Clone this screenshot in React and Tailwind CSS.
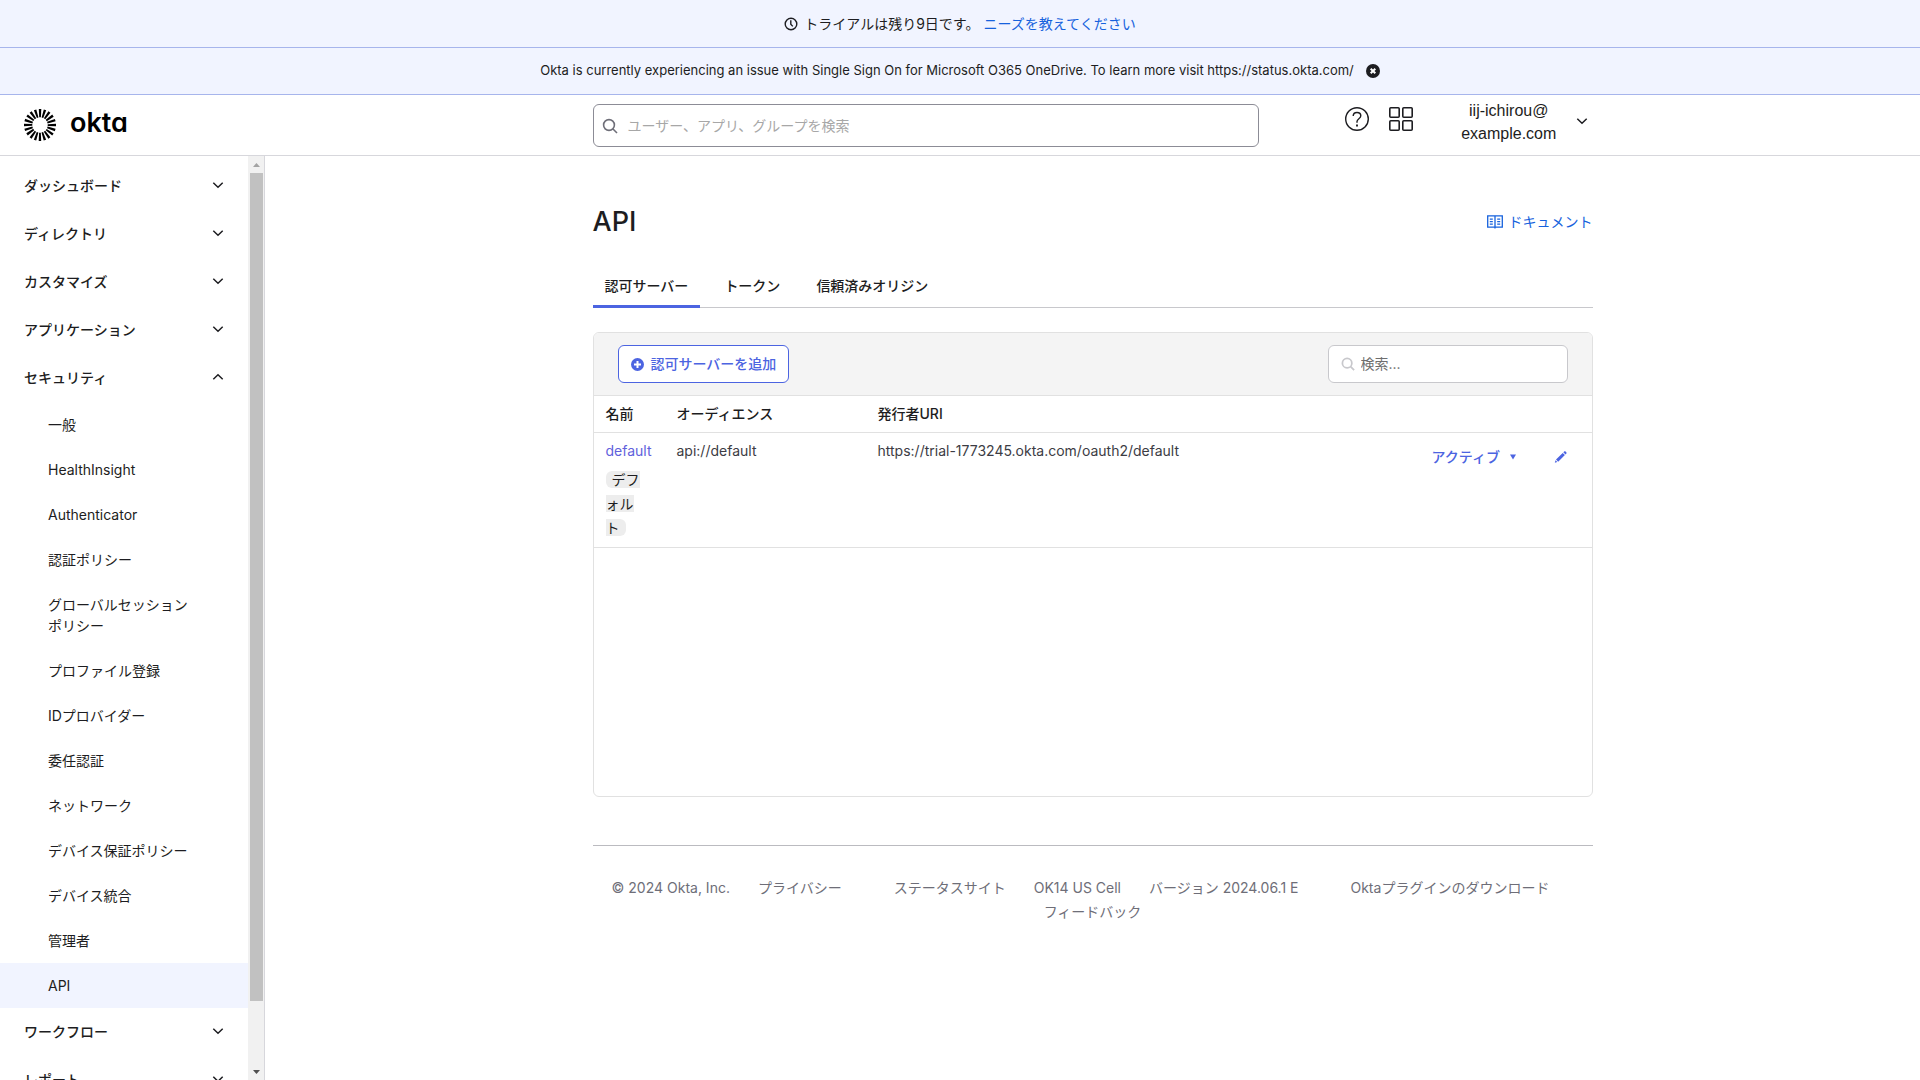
import React, { useState } from 'react'

const SECURITY_ITEMS = [
  '一般',
  'HealthInsight',
  'Authenticator',
  '認証ポリシー',
  'グローバルセッションポリシー',
  'プロファイル登録',
  'IDプロバイダー',
  '委任認証',
  'ネットワーク',
  'デバイス保証ポリシー',
  'デバイス統合',
  '管理者',
  'API',
]

const NAV_GROUPS = [
  { label: 'ダッシュボード' },
  { label: 'ディレクトリ' },
  { label: 'カスタマイズ' },
  { label: 'アプリケーション' },
  { label: 'セキュリティ', items: SECURITY_ITEMS },
  { label: 'ワークフロー' },
  { label: 'レポート' },
]

const TABS = ['認可サーバー', 'トークン', '信頼済みオリジン']

const SERVERS = [
  { name: 'default', audience: 'api://default', issuer: 'https://trial-1773245.okta.com/oauth2/default' },
]

function Chevron({ up = false }) {
  return (
    <svg width="12" height="10" viewBox="0 0 12 10" fill="none" stroke="currentColor" strokeWidth="1.5" aria-hidden="true">
      <path d={up ? 'M1.3 6.3 6 1.8l4.7 4.5' : 'M1.3 1.8l4.7 4.5 4.7-4.5'} />
    </svg>
  )
}

function SearchIcon({ size = 16, strokeWidth = 1.6 }) {
  return (
    <svg width={size} height={size} viewBox="0 0 16 16" fill="none" stroke="currentColor" strokeWidth={strokeWidth} className="shrink-0" aria-hidden="true">
      <circle cx="7" cy="7" r="5.4" />
      <path d="M11 11l4 4" />
    </svg>
  )
}

function SunLogo() {
  const rays = Array.from({ length: 20 }, (_, i) => i * 18)
  return (
    <svg width="32" height="32" viewBox="-16 -16 32 32" aria-hidden="true">
      {rays.map((deg) => (
        <path key={deg} d="M-1.2 -16h2.5l-.4 8.3h-1.7z" transform={`rotate(${deg})`} fill="#000" />
      ))}
    </svg>
  )
}

function Banners() {
  const [open, setOpen] = useState(true)
  return (
    <div className="shrink-0 text-[#1d1d21]">
      <div className="flex h-12 items-center justify-center border-b border-[#a7b5ec] bg-[#f1f4ff] text-sm">
        <svg className="mr-1.5" width="14" height="14" viewBox="0 0 14 14" fill="none" stroke="currentColor" strokeWidth="1.4" aria-hidden="true">
          <circle cx="7" cy="7" r="5.8" />
          <path d="M6.8 3.2v4l2 2.2" />
        </svg>
        <span>トライアルは残り9日です。</span>
        <a href="#needs" className="ml-1 text-[#1662dd]">ニーズを教えてください</a>
      </div>
      {open && (
        <div className="flex h-[47px] items-center justify-center border-b border-[#a7b5ec] bg-[#f1f4ff] text-[13px]">
          <span>
            Okta is currently experiencing an issue with Single Sign On for Microsoft O365 OneDrive. To learn more visit https://status.okta.com/
          </span>
          <button aria-label="閉じる" className="ml-3" onClick={() => setOpen(false)}>
            <svg width="14" height="14" viewBox="0 0 14 14" aria-hidden="true">
              <circle cx="7" cy="7" r="7" fill="#1d1d21" />
              <path d="M4.7 4.7l4.6 4.6M9.3 4.7L4.7 9.3" stroke="#fff" strokeWidth="2" />
            </svg>
          </button>
        </div>
      )}
    </div>
  )
}

function Header() {
  return (
    <header className="flex h-[61px] shrink-0 border-b border-[#d7d7dc]">
      <a href="#home" aria-label="okta" className="flex w-[265px] shrink-0 items-center gap-3.5 pl-6">
        <SunLogo />
        <span className="pb-1 text-[27px] leading-8 font-semibold text-black [font-feature-settings:'cv11']">okta</span>
      </a>
      <div className="flex flex-1 justify-center">
        <div className="flex w-full max-w-[1000px] items-start">
          <label className="mt-[9px] flex h-[43px] w-2/3 items-center gap-2.5 rounded-md border border-[#8c8c96] px-2 text-[#6e6e78]">
            <SearchIcon />
            <input
              type="text"
              aria-label="検索"
              placeholder="ユーザー、アプリ、グループを検索"
              className="w-full text-sm outline-none placeholder:text-[#a7a7a7]"
            />
          </label>
          <div className="ml-[86px] flex gap-5 pt-3 text-[#1d1d21]">
            <button aria-label="ヘルプ">
              <svg width="24" height="24" viewBox="0 0 24 24" fill="none" stroke="currentColor" strokeWidth="1.4" aria-hidden="true">
                <circle cx="12" cy="12" r="11.3" />
                <path d="M8.2 9.1c0-2.2 1.6-3.6 3.8-3.6s3.8 1.3 3.8 3.3c0 2.9-3.8 2.9-3.8 5.7v1.3" />
                <path d="M12 17.6v2" strokeWidth="1.9" />
              </svg>
            </button>
            <button aria-label="アプリ">
              <svg width="24" height="24" viewBox="0 0 24 24" fill="none" stroke="currentColor" strokeWidth="1.6" aria-hidden="true">
                <rect x=".8" y=".8" width="9.4" height="9.4" rx="1" />
                <rect x="13.8" y=".8" width="9.4" height="9.4" rx="1" />
                <rect x=".8" y="13.8" width="9.4" height="9.4" rx="1" />
                <rect x="13.8" y="13.8" width="9.4" height="9.4" rx="1" />
              </svg>
            </button>
          </div>
          <button className="ml-12 flex items-center gap-5 pt-1 text-[#1d1d21]">
            <span className="text-center font-['Liberation_Sans',Arial,sans-serif] text-base leading-[23px]">
              iij-ichirou@
              <br />
              example.com
            </span>
            <Chevron />
          </button>
        </div>
      </div>
    </header>
  )
}

function Sidebar() {
  return (
    <aside className="flex w-[265px] shrink-0 overflow-hidden border-r border-[#d7d7dc]">
      <nav className="flex-1 overflow-hidden pt-1.5 text-sm text-[#1d1d21]">
        {NAV_GROUPS.map((group) => (
          <div key={group.label}>
            <button className="flex h-12 w-full items-center justify-between pr-6 pl-6 font-medium" aria-expanded={!!group.items}>
              {group.label}
              <Chevron up={!!group.items} />
            </button>
            {group.items && (
              <ul>
                {group.items.map((item) => (
                  <li key={item}>
                    <a
                      href="#nav"
                      className={`block py-3 pr-14 pl-12 leading-[21px] ${item === 'API' ? 'bg-[#f1f4ff]' : ''}`}
                    >
                      {item}
                    </a>
                  </li>
                ))}
              </ul>
            )}
          </div>
        ))}
      </nav>

      {/* Scrollbar */}
      <div className="flex w-4 flex-col bg-[#f1f1f1] pr-px pl-0.5" aria-hidden="true">
        <div className="flex h-[17px] shrink-0 items-center justify-center">
          <svg width="7" height="4" viewBox="0 0 7 4"><path d="M0 4L3.5 0 7 4z" fill="#a3a3a3" /></svg>
        </div>
        <div className="min-h-0 flex-1">
          <div className="h-[93%] bg-[#c1c1c1]" />
        </div>
        <div className="flex h-[17px] shrink-0 items-center justify-center">
          <svg width="7" height="4" viewBox="0 0 7 4"><path d="M0 0L3.5 4 7 0z" fill="#505050" /></svg>
        </div>
      </div>
    </aside>
  )
}

function ServerTable() {
  return (
    <table className="w-full table-fixed text-left text-sm">
      <thead>
        <tr className="h-9 border-b border-[#e1e1e1]">
          <th className="w-[71px] px-3 font-medium">名前</th>
          <th className="w-[201px] px-3 font-medium">オーディエンス</th>
          <th className="px-3 font-medium">発行者URI</th>
          <th className="w-[184px]" aria-label="アクション" />
        </tr>
      </thead>
      <tbody>
        {SERVERS.map((server) => (
          <tr key={server.name} className="border-b border-[#e1e1e1] align-top leading-6">
            <td className="px-3 pt-1.5 pb-[7px]">
              <a href="#server" className="mb-[5px] block text-[#6161dc]">{server.name}</a>
              <span className="rounded-md bg-[#ededed] px-1.5 break-all">デフォルト</span>
            </td>
            <td className="px-3 pt-1.5 text-[#3c3c44]">{server.audience}</td>
            <td className="px-3 pt-1.5 text-[#3c3c44]">{server.issuer}</td>
            <td className="pt-3 pr-6">
              <div className="flex items-center justify-between pl-6 text-[#4c64e1]">
                <button className="flex items-center gap-2.5 font-medium" aria-haspopup="menu">
                  アクティブ
                  <svg width="6" height="6" viewBox="0 0 6 6" fill="currentColor" aria-hidden="true"><path d="M0 .5h6L3 5.5z" /></svg>
                </button>
                <button aria-label="編集">
                  <svg width="14" height="14" viewBox="0 0 14 14" fill="currentColor" aria-hidden="true">
                    <path d="M.8 12.8l.7-2.5 1.8 1.8zM2 9.6l6.7-6.7 2.2 2.2-6.7 6.7zM9.3 2.3l.9-.9c1-1 3.2 1.2 2.2 2.2l-.9.9z" />
                  </svg>
                </button>
              </div>
            </td>
          </tr>
        ))}
      </tbody>
    </table>
  )
}

function Footer() {
  return (
    <footer className="mt-12 flex flex-wrap justify-center border-t border-[#bbbbc0] pt-[30px] text-sm leading-6 text-[#6e6e78]">
      <span className="px-3.5">© 2024 Okta, Inc.</span>
      <a href="#privacy" className="mr-6 px-3.5">プライバシー</a>
      <a href="#status" className="px-3.5">ステータスサイト</a>
      <span className="px-3.5">OK14 US Cell</span>
      <span className="mr-6 px-3.5">バージョン 2024.06.1 E</span>
      <a href="#plugin" className="mr-6 px-3.5">Oktaプラグインのダウンロード</a>
      <a href="#feedback" className="px-3.5">フィードバック</a>
    </footer>
  )
}

export default function App() {
  const [tab, setTab] = useState(TABS[0])

  return (
    <div className="flex h-screen flex-col overflow-hidden bg-white font-['Inter','Noto_Sans_CJK_JP',sans-serif] text-[#1d1d21]">
      <Banners />
      <Header />
      <div className="flex min-h-0 flex-1">
        <Sidebar />
        <main className="flex-1 overflow-hidden">
          <div className="mx-auto max-w-[1000px] pt-12">
            <div className="flex items-center justify-between">
              <h1 className="text-[27px] leading-9 font-medium">API</h1>
              <a href="#docs" className="flex items-center gap-1.5 text-sm text-[#1662dd]">
                <svg width="16" height="14" viewBox="0 0 16 14" fill="none" stroke="currentColor" strokeWidth="1.3" aria-hidden="true">
                  <path d="M.7 .8h14.6v11.4H.7zM8 .8v12.6M2.8 4.2h3M2.8 6.7h3M2.8 9.2h3M10.2 4.2h3M10.2 6.7h3M10.2 9.2h3" />
                </svg>
                ドキュメント
              </a>
            </div>

            {/* Tabs */}
            <div className="mt-[34px] flex gap-3 border-b border-[#c8c8cc]" role="tablist">
              {TABS.map((label) => (
                <button
                  key={label}
                  role="tab"
                  aria-selected={tab === label}
                  onClick={() => setTab(label)}
                  className={`-mb-px border-b-3 px-3 pb-[7px] text-sm leading-6 font-medium ${
                    tab === label ? 'border-[#4c64e1]' : 'border-transparent'
                  }`}
                >
                  {label}
                </button>
              ))}
            </div>

            <section className="mt-6 min-h-[465px] overflow-hidden rounded-md border border-[#e1e1e1]">
              <div className="flex items-center justify-between border-b border-[#e1e1e1] bg-[#f4f4f4] px-6 py-3">
                <button className="flex h-[38px] items-center gap-[7px] rounded-md border border-[#4c64e1] bg-white px-3 text-sm font-medium text-[#4c64e1]">
                  <svg width="13" height="13" viewBox="0 0 13 13" aria-hidden="true">
                    <circle cx="6.5" cy="6.5" r="6.5" fill="currentColor" />
                    <path d="M6.5 3v7M3 6.5h7" stroke="#fff" strokeWidth="2" />
                  </svg>
                  認可サーバーを追加
                </button>
                <label className="flex h-[38px] w-60 items-center gap-1.5 rounded-md border border-[#c8c8cc] bg-white px-3 text-[#c8c8cc]">
                  <SearchIcon size={14} strokeWidth={2} />
                  <input
                    type="text"
                    aria-label="サーバーを検索"
                    placeholder="検索..."
                    className="w-full text-sm text-[#1d1d21] outline-none placeholder:text-[#6e6e6e]"
                  />
                </label>
              </div>
              <ServerTable />
            </section>

            <Footer />
          </div>
        </main>
      </div>
    </div>
  )
}
